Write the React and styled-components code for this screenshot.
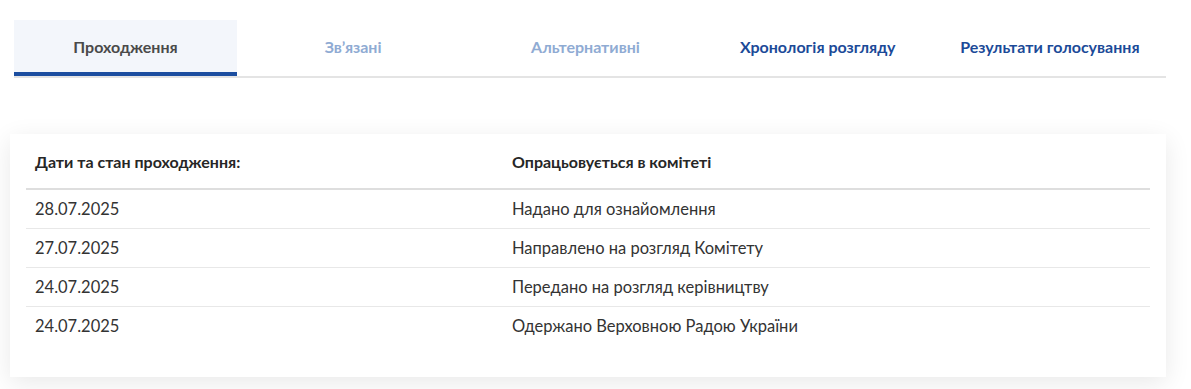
import React from 'react';
import styled, { createGlobalStyle } from 'styled-components';

const GlobalStyle = createGlobalStyle`
  body {
    margin: 0;
    background: #fff;
    font-family: Lato, "Open Sans", sans-serif;
    color: #333;
  }
`;

// styles
const Page = styled.div`
  padding: 20px 25px 12px 10px;
`;
const TabList = styled.div`
  display: grid;
  grid-template-columns: 223px repeat(4, 1fr);
  margin-left: 4px;
  border-bottom: 2px solid #e4e4e4;
`;
const Tab = styled.div`
  height: 52px;
  display: flex;
  align-items: center;
  justify-content: center;
  font-size: 16px;
  font-weight: 700;
  border-bottom: 4px solid ${(props) => (props.active ? '#1c4ea0' : 'transparent')};
  background: ${(props) => (props.active ? '#f3f6fb' : 'transparent')};
  color: ${(props) => {
    if (props.active) return '#4a4a4a';
    if (props.muted) return '#8fabd3';
    return '#1b4a98';
  }};
`;
const Card = styled.div`
  margin-top: 56px;
  background: #fff;
  padding: 0 16px 32px;
  box-shadow: 0 6px 24px rgba(0, 0, 0, 0.09);
`;
const Row = styled.div`
  display: grid;
  grid-template-columns: 477px 1fr;
  align-items: center;
  height: ${(props) => (props.head ? '54px' : '38px')};
  border-bottom: ${(props) => (props.head ? '2px solid #dedede' : '1px solid #e8e8e8')};

  &:last-child {
    border-bottom: none;
  }
`;
const Cell = styled.div`
  padding-left: 9px;
  font-size: ${(props) => (props.head ? '16px' : '16.5px')};
  font-weight: ${(props) => (props.head ? 700 : 400)};
  color: ${(props) => (props.head ? '#262626' : '#333')};
`;

const tabs = [
  { label: 'Проходження', active: true },
  { label: 'Зв’язані', muted: true },
  { label: 'Альтернативні', muted: true },
  { label: 'Хронологія розгляду' },
  { label: 'Результати голосування' },
];

const rows = [
  { date: '28.07.2025', status: 'Надано для ознайомлення' },
  { date: '27.07.2025', status: 'Направлено на розгляд Комітету' },
  { date: '24.07.2025', status: 'Передано на розгляд керівництву' },
  { date: '24.07.2025', status: 'Одержано Верховною Радою України' },
];

const App = () => (
  <Page>
    <GlobalStyle />
    <TabList>
      {tabs.map((tab) => (
        <Tab key={tab.label} active={tab.active} muted={tab.muted}>
          {tab.label}
        </Tab>
      ))}
    </TabList>
    <Card>
      <Row head>
        <Cell head>Дати та стан проходження:</Cell>
        <Cell head>Опрацьовується в комітеті</Cell>
      </Row>
      {rows.map((item, i) => (
        <Row key={i}>
          <Cell>{item.date}</Cell>
          <Cell>{item.status}</Cell>
        </Row>
      ))}
    </Card>
  </Page>
);

export default App;
